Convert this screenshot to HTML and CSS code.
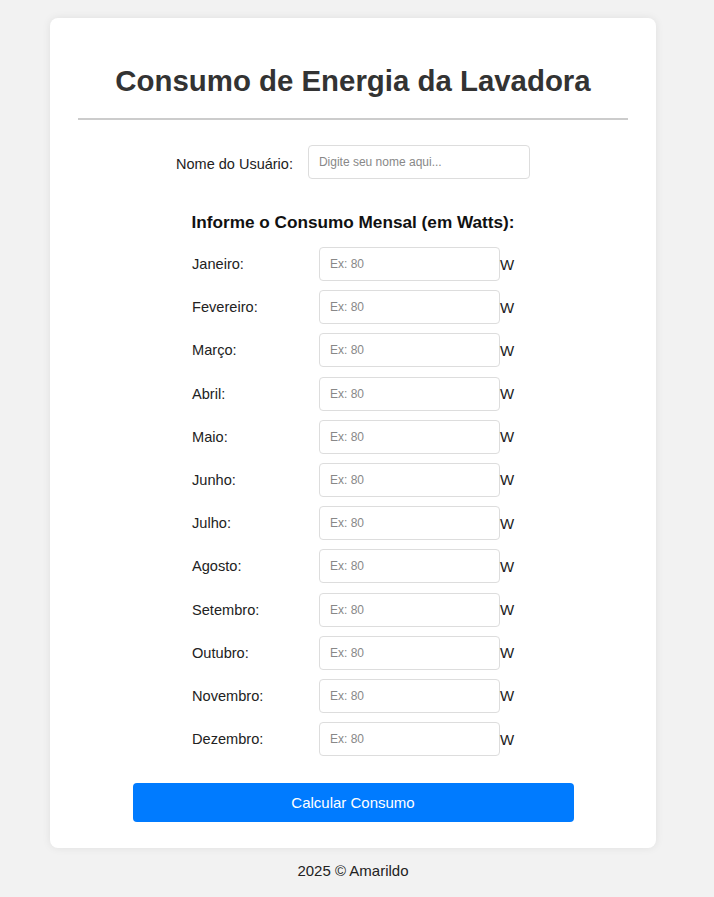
FILE: index.html
```html
<!DOCTYPE html>
<html lang="pt-BR">
<head>
<meta charset="utf-8">
<title>Consumo de Energia da Lavadora</title>
<link rel="stylesheet" href="styles.css">
</head>
<body>
<div class="card">
  <h1 class="title">Consumo de Energia da Lavadora</h1>
  <hr class="divider">
  <div class="name-row">
    <label class="name-label" for="nome">Nome do Usuário:</label>
    <input class="name-input" id="nome" type="text" placeholder="Digite seu nome aqui...">
  </div>
  <h3 class="subtitle">Informe o Consumo Mensal (em Watts):</h3>
  <div class="months">
    <div class="month-row"><label class="month-label">Janeiro:</label><input class="month-input" type="number" placeholder="Ex: 80"><span class="unit">W</span></div>
    <div class="month-row"><label class="month-label">Fevereiro:</label><input class="month-input" type="number" placeholder="Ex: 80"><span class="unit">W</span></div>
    <div class="month-row"><label class="month-label">Março:</label><input class="month-input" type="number" placeholder="Ex: 80"><span class="unit">W</span></div>
    <div class="month-row"><label class="month-label">Abril:</label><input class="month-input" type="number" placeholder="Ex: 80"><span class="unit">W</span></div>
    <div class="month-row"><label class="month-label">Maio:</label><input class="month-input" type="number" placeholder="Ex: 80"><span class="unit">W</span></div>
    <div class="month-row"><label class="month-label">Junho:</label><input class="month-input" type="number" placeholder="Ex: 80"><span class="unit">W</span></div>
    <div class="month-row"><label class="month-label">Julho:</label><input class="month-input" type="number" placeholder="Ex: 80"><span class="unit">W</span></div>
    <div class="month-row"><label class="month-label">Agosto:</label><input class="month-input" type="number" placeholder="Ex: 80"><span class="unit">W</span></div>
    <div class="month-row"><label class="month-label">Setembro:</label><input class="month-input" type="number" placeholder="Ex: 80"><span class="unit">W</span></div>
    <div class="month-row"><label class="month-label">Outubro:</label><input class="month-input" type="number" placeholder="Ex: 80"><span class="unit">W</span></div>
    <div class="month-row"><label class="month-label">Novembro:</label><input class="month-input" type="number" placeholder="Ex: 80"><span class="unit">W</span></div>
    <div class="month-row"><label class="month-label">Dezembro:</label><input class="month-input" type="number" placeholder="Ex: 80"><span class="unit">W</span></div>
  </div>
  <button class="calc-btn" type="button">Calcular Consumo</button>
</div>
<footer class="footer">2025 © Amarildo</footer>
</body>
</html>
```
FILE: styles.css
```css
html, body {
  margin: 0;
  padding: 0;
}
body {
  background: #f2f2f2;
  font-family: "Liberation Sans", Arial, sans-serif;
  color: #222;
  padding: 18px 0 0 50px;
}
.card {
  width: 606px;
  box-sizing: border-box;
  background: #fff;
  border-radius: 8px;
  box-shadow: 0 0 8px rgba(0, 0, 0, 0.08);
  padding: 46px 28px 26px;
  display: flex;
  flex-direction: column;
  align-items: center;
}
.title {
  margin: 0;
  font-size: 29.4px;
  font-weight: bold;
  color: #333;
  line-height: 34px;
}
.divider {
  align-self: stretch;
  border: 0;
  border-top: 2px solid #ccc;
  margin: 20px 0 0;
}
.name-row {
  display: flex;
  align-items: center;
  gap: 15px;
  margin-top: 25px;
}
.name-label {
  font-size: 14.5px;
  color: #222;
  padding-top: 3px;
}
.name-input {
  width: 222px;
  height: 34px;
  box-sizing: border-box;
  border: 1px solid #ddd;
  border-radius: 4px;
  padding: 0 10px;
  font-family: "Liberation Sans", Arial, sans-serif;
  font-size: 12px;
}
.name-input::placeholder,
.month-input::placeholder {
  color: #888;
}
.subtitle {
  margin: 33px 0 0;
  font-size: 17.2px;
  font-weight: bold;
  color: #111;
  line-height: 20px;
}
.months {
  margin-top: 15px;
  display: flex;
  flex-direction: column;
  gap: 9.2px;
}
.month-row {
  display: flex;
  align-items: center;
}
.month-label {
  width: 127px;
  font-size: 14.6px;
  color: #222;
}
.month-input {
  width: 181px;
  height: 34px;
  box-sizing: border-box;
  border: 1px solid #ddd;
  border-radius: 4px;
  padding: 0 10px;
  font-family: "Liberation Sans", Arial, sans-serif;
  font-size: 12px;
  -moz-appearance: textfield;
}
.month-input::-webkit-inner-spin-button,
.month-input::-webkit-outer-spin-button {
  -webkit-appearance: none;
  margin: 0;
}
.unit {
  font-size: 15px;
  color: #222;
  width: 14px;
}
.calc-btn {
  margin-top: 27px;
  width: 441px;
  height: 39px;
  border: 0;
  border-radius: 4px;
  background: #007bff;
  color: #fff;
  font-family: "Liberation Sans", Arial, sans-serif;
  font-size: 15px;
  cursor: pointer;
}
.footer {
  width: 606px;
  text-align: center;
  font-size: 15px;
  color: #222;
  margin-top: 14px;
}
```
